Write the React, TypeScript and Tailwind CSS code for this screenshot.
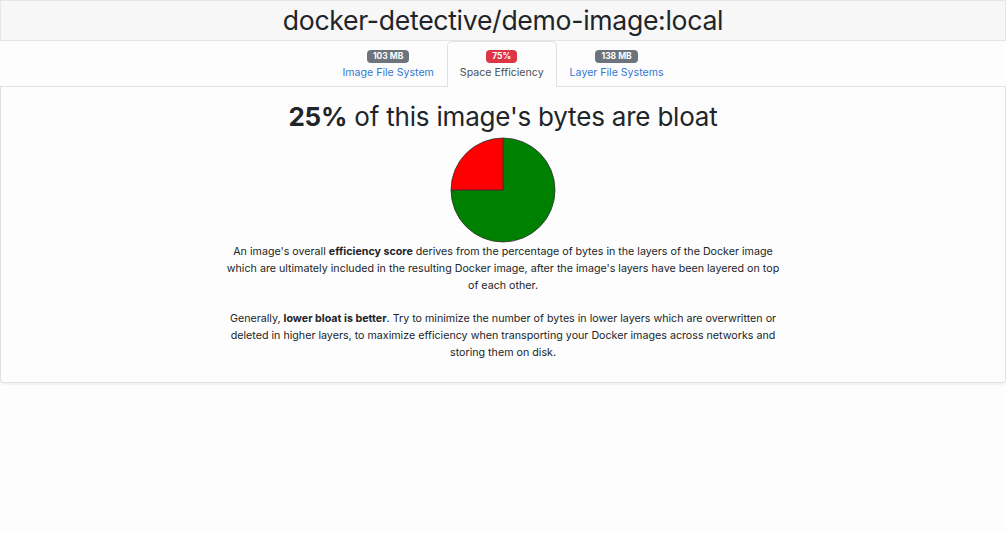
import React from "react";

const Badge = ({ label, color }: { label: string; color: string }) => (
  <span className={`inline-block rounded-[4px] px-[6px] pt-[1px] pb-[1px] text-[8.5px] font-bold leading-[10.5px] text-white ${color}`}>
    {label}
  </span>
);

const tabs = [
  { badge: "103 MB", badgeColor: "bg-[#6c757d]", label: "Image File System", active: false },
  { badge: "75%", badgeColor: "bg-[#dc3545]", label: "Space Efficiency", active: true },
  { badge: "138 MB", badgeColor: "bg-[#6c757d]", label: "Layer File Systems", active: false },
];

const Pie = () => (
  <svg width="106" height="106" viewBox="0 0 106 106">
    <path d="M53 53 L53 1 A52 52 0 1 1 1 53 Z" fill="#008000" stroke="#333" strokeWidth="0.8" />
    <path d="M53 53 L1 53 A52 52 0 0 1 53 1 Z" fill="#ff0000" stroke="#333" strokeWidth="0.8" />
  </svg>
);

export default function App() {
  return (
    <div className="min-h-screen bg-[#fdfdfd] text-[#212529]" style={{ fontFamily: "Inter, 'Liberation Sans', sans-serif" }}>
      <header className="flex h-[41px] items-center justify-center border border-[#e6e6e6] bg-[#f7f7f7]">
        <h1 className="text-[26.6px] font-normal leading-none tracking-[-0.3px]">docker-detective/demo-image:local</h1>
      </header>

      <nav className="flex h-[46px] justify-center border-b border-[#dee2e6]">
        {tabs.map((t) => (
          <div
            key={t.label}
            className={`-mb-px flex flex-col items-center gap-[3px] px-[12px] pt-[8px] ${
              t.active ? "rounded-t-[5px] border border-b-0 border-[#dee2e6] bg-[#fdfdfd]" : "border border-transparent"
            }`}
          >
            <Badge label={t.badge} color={t.badgeColor} />
            <span className={`text-[10.6px] leading-[14px] ${t.active ? "text-[#495057]" : "text-[#3577d4]"}`}>{t.label}</span>
          </div>
        ))}
      </nav>

      <main className="flex flex-col items-center rounded-b-[4px] border border-t-0 border-[#dee2e6] pb-[21px] shadow-[0_2px_1px_rgba(0,0,0,0.04)]">
        <h2 className="mt-[14px] text-[26px] leading-[32px] tracking-[-0.2px]">
          <span className="font-bold">25%</span> of this image's bytes are bloat
        </h2>
        <div className="mt-[4px]">
          <Pie />
        </div>
        <div className="w-[560px] text-center text-[10.7px] leading-[17px]">
          <p>
            An image's overall <b>efficiency score</b> derives from the percentage of bytes in the layers of the Docker image which are
            ultimately included in the resulting Docker image, after the image's layers have been layered on top of each other.
          </p>
          <p className="mt-[16px]">
            Generally, <b>lower bloat is better</b>. Try to minimize the number of bytes in lower layers which are overwritten or deleted in
            higher layers, to maximize efficiency when transporting your Docker images across networks and storing them on disk.
          </p>
        </div>
      </main>
    </div>
  );
}
